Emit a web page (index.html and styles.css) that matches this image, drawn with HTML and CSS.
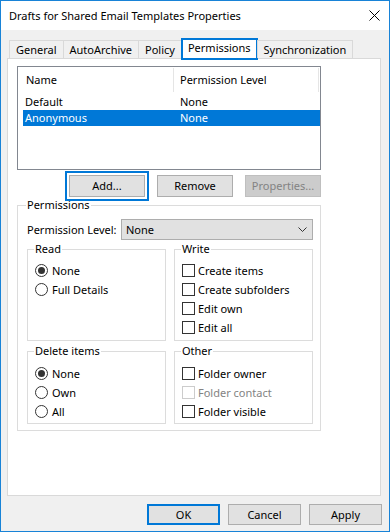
FILE: index.html
```html
<!DOCTYPE html>
<html>
<head>
    <link rel="stylesheet" href="styles.css">
</head>
<body>
    <div class="dialog">
        <div class="titlebar">
            <span class="title">Drafts for Shared Email Templates Properties</span>
            <svg class="close" width="11" height="11" viewBox="0 0 11 11"><path d="M0.5 0.5L10.5 10.5M10.5 0.5L0.5 10.5" stroke="#000" stroke-width="1"/></svg>
        </div>

        <div class="dialog-body">
            <div class="tabs">
                <div class="tab">General</div>
                <div class="tab">AutoArchive</div>
                <div class="tab">Policy</div>
                <div class="tab active">Permissions</div>
                <div class="tab">Synchronization</div>
            </div>

            <div class="panel">
                <div class="list">
                    <div class="list-head">
                        <div class="col-name">Name</div>
                        <div class="col-level">Permission Level</div>
                    </div>
                    <div class="list-row">
                        <span class="col-name">Default</span>
                        <span class="col-level">None</span>
                    </div>
                    <div class="list-row selected">
                        <span class="col-name">Anonymous</span>
                        <span class="col-level">None</span>
                    </div>
                </div>

                <div class="list-buttons">
                    <button class="btn focused">Add...</button>
                    <button class="btn">Remove</button>
                    <button class="btn" disabled>Properties...</button>
                </div>

                <fieldset class="group perms">
                    <legend>Permissions</legend>
                    <div class="level-row">
                        <span class="level-label">Permission Level:</span>
                        <div class="combo">
                            <span>None</span>
                            <svg width="9" height="5" viewBox="0 0 9 5"><path d="M0.5 0.5L4.5 4.5L8.5 0.5" fill="none" stroke="#333" stroke-width="1"/></svg>
                        </div>
                    </div>

                    <div class="group-grid">
                        <fieldset class="group sub">
                            <legend>Read</legend>
                            <div class="opt"><span class="radio checked"></span>None</div>
                            <div class="opt"><span class="radio"></span>Full Details</div>
                        </fieldset>
                        <fieldset class="group sub">
                            <legend>Write</legend>
                            <div class="opt"><span class="check"></span>Create items</div>
                            <div class="opt"><span class="check"></span>Create subfolders</div>
                            <div class="opt"><span class="check"></span>Edit own</div>
                            <div class="opt"><span class="check"></span>Edit all</div>
                        </fieldset>
                        <fieldset class="group sub lower">
                            <legend>Delete items</legend>
                            <div class="opt"><span class="radio checked"></span>None</div>
                            <div class="opt"><span class="radio"></span>Own</div>
                            <div class="opt"><span class="radio"></span>All</div>
                        </fieldset>
                        <fieldset class="group sub lower">
                            <legend>Other</legend>
                            <div class="opt"><span class="check"></span>Folder owner</div>
                            <div class="opt disabled"><span class="check"></span>Folder contact</div>
                            <div class="opt"><span class="check"></span>Folder visible</div>
                        </fieldset>
                    </div>
                </fieldset>
            </div>

            <div class="dialog-buttons">
                <button class="btn wide default">OK</button>
                <button class="btn wide">Cancel</button>
                <button class="btn wide">Apply</button>
            </div>
        </div>
    </div>
</body>
</html>
```

FILE: styles.css
```css
body {
    margin: 0;
    padding: 0;
    font-family: "Noto Sans", "Open Sans", sans-serif;
    font-size: 11px;
    line-height: 16px;
    color: #000;
    background-color: #fff;
}

.dialog {
    width: 390px;
    height: 532px;
    box-sizing: border-box;
    border: 1px solid #1883d7;
    background-color: #f0f0f0;
    display: flex;
    flex-direction: column;
}

.titlebar {
    height: 29px;
    flex: none;
    background-color: #fff;
    display: flex;
    align-items: center;
    justify-content: space-between;
    padding: 0 9px 0 8px;
}

.dialog-body {
    flex: 1;
    display: flex;
    flex-direction: column;
    padding: 8px 8px 6px 6px;
}

/* tabs */
.tabs {
    display: flex;
    align-items: flex-end;
    height: 20px;
    padding-left: 3px;
    position: relative;
    z-index: 1;
}

.tab {
    height: 18px;
    box-sizing: border-box;
    padding: 0 6px;
    border: 1px solid #d9d9d9;
    border-bottom: none;
    margin-left: -1px;
    line-height: 17px;
    white-space: nowrap;
}

.tab.active {
    height: 22px;
    margin-bottom: -2px;
    background-color: #fff;
    border: 2px solid #0078d7;
    line-height: 16px;
    padding: 0 5px;
}

.panel {
    height: 438px;
    box-sizing: border-box;
    background-color: #fff;
    border: 1px solid #d9d9d9;
    padding: 7px 9px;
}

/* list view */
.list {
    width: 304px;
    height: 104px;
    box-sizing: border-box;
    border: 1px solid #828790;
}

.list-head {
    display: flex;
    height: 27px;
    box-sizing: border-box;
    padding: 1px 0 2px;
    line-height: 24px;
}

.list-head .col-name {
    width: 156px;
    box-sizing: border-box;
    padding-left: 8px;
    border-right: 1px solid #e5e5e5;
}

.list-head .col-level {
    width: 145px;
    box-sizing: border-box;
    padding-left: 6px;
    border-right: 1px solid #e5e5e5;
}

.list-row {
    display: flex;
    height: 16px;
    margin-left: 5px;
    padding-left: 2px;
}

.list-row .col-name {
    width: 155px;
}

.list-row.selected {
    background-color: #0078d7;
    color: #fff;
}

/* buttons */
.list-buttons {
    width: 304px;
    display: flex;
    justify-content: flex-end;
    gap: 12px;
    margin-top: 5px;
}

.btn {
    width: 76px;
    height: 22px;
    box-sizing: border-box;
    padding: 0;
    background-color: #e1e1e1;
    border: 1px solid #adadad;
    font: inherit;
    color: #000;
}

.btn.focused {
    outline: 2px solid #0078d7;
    outline-offset: 2px;
}

.btn:disabled {
    background-color: #cccccc;
    border-color: #bfbfbf;
    color: #838383;
}

.btn.wide {
    width: 73px;
    height: 21px;
}

.btn.default {
    border: 2px solid #0078d7;
}

.dialog-buttons {
    display: flex;
    justify-content: flex-end;
    gap: 8px;
    margin-top: 8px;
    margin-right: -1px;
}

/* group boxes */
fieldset.group {
    margin: 0;
    min-width: 0;
    border: 1px solid #dcdcdc;
}

fieldset.group legend {
    padding: 0 1px;
    margin-left: -1px;
    line-height: 16px;
}

.perms {
    width: 304px;
    box-sizing: border-box;
    margin-top: 3px;
    padding: 6px 7px 6px 9px;
}

.level-row {
    display: flex;
    align-items: center;
    height: 21px;
}

.level-label {
    width: 94px;
    flex: none;
    white-space: nowrap;
}

.combo {
    flex: 1;
    height: 21px;
    box-sizing: border-box;
    background-color: #e1e1e1;
    border: 1px solid #adadad;
    display: flex;
    align-items: center;
    justify-content: space-between;
    padding: 0 5px 0 4px;
}

.group-grid {
    display: grid;
    grid-template-columns: 1fr 1fr;
    column-gap: 8px;
    row-gap: 2px;
    margin-top: 1px;
}

.sub {
    padding: 4px 0 3px 7px;
}

.sub.lower {
    padding: 5px 0 2px 7px;
}

.opt {
    display: flex;
    align-items: center;
    height: 19px;
    gap: 4px;
    white-space: nowrap;
}

.radio {
    width: 13px;
    height: 13px;
    box-sizing: border-box;
    border: 1px solid #333;
    border-radius: 50%;
    display: flex;
    align-items: center;
    justify-content: center;
    background-color: #fff;
}

.radio.checked::after {
    content: '';
    width: 7px;
    height: 7px;
    border-radius: 50%;
    background-color: #333;
}

.check {
    width: 13px;
    height: 13px;
    box-sizing: border-box;
    border: 1px solid #333;
    background-color: #fff;
    margin-right: -1px;
}

.opt.disabled {
    color: #838383;
}

.opt.disabled .check {
    border-color: #cccccc;
}
```
